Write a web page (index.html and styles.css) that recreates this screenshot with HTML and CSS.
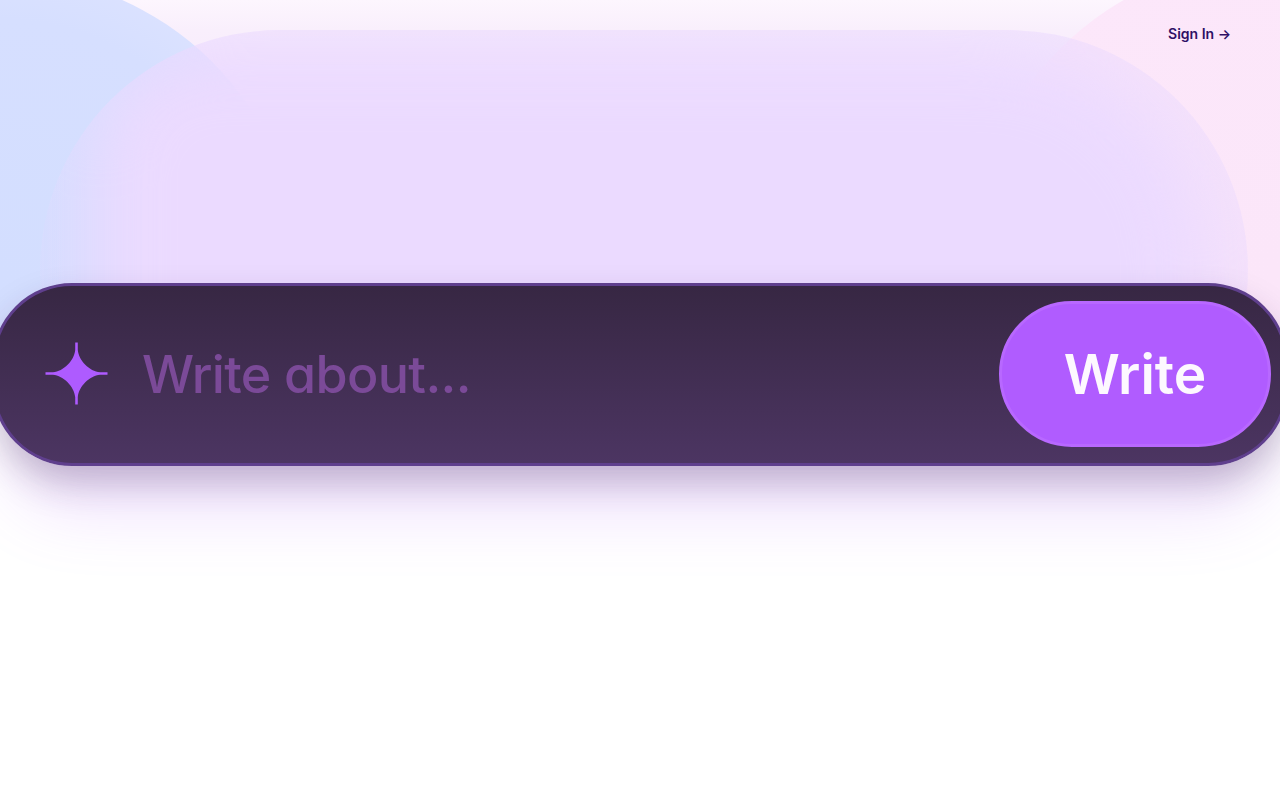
FILE: index.html
```html
<!DOCTYPE html>
<html lang="en">
<head>
<meta charset="utf-8">
<title>Write</title>
<link rel="stylesheet" href="styles.css">
</head>
<body>
<div class="decor" aria-hidden="true">
  <div class="blob blob-blue"></div>
  <div class="blob blob-pink"></div>
  <div class="panel"><div class="panel-core"></div></div>
</div>
<main class="page">
  <header class="topbar">
    <a class="signin" href="#">Sign In →</a>
  </header>
  <form class="bar">
    <svg class="star" viewBox="-32 -32 64 64" aria-hidden="true">
      <path d="M1.3 -31.5L1.3 -24C2.5 -13 13 -2.5 24 -1.3L31.5 -1.3L31.5 1.3L24 1.3C13 2.5 2.5 13 1.3 24L1.3 31.5L-1.3 31.5L-1.3 24C-2.5 13 -13 2.5 -24 1.3L-31.5 1.3L-31.5 -1.3L-24 -1.3C-13 -2.5 -2.5 -13 -1.3 -24L-1.3 -31.5Z"/>
    </svg>
    <span class="placeholder">Write about...</span>
    <button class="write" type="button">Write</button>
  </form>
</main>
</body>
</html>
```
FILE: styles.css
```css
* { box-sizing: border-box; }
html, body { margin: 0; height: 100%; }
body {
  background: #fff;
  font-family: Inter, "Liberation Sans", sans-serif;
  overflow: hidden;
  position: relative;
}
.decor {
  position: absolute;
  inset: 0 0 auto 0;
  height: 374px;
  overflow: hidden;
  background: linear-gradient(180deg, #fdf6fe 0, #f9effc 30px, #f6e8fc 100px);
}
.blob {
  position: absolute;
  top: -26px;
  width: 600px;
  height: 600px;
  border-radius: 50%;
}
.blob-blue {
  left: -300px;
  background: radial-gradient(circle at center, #d3deff 0, #d6dfff 60%, #e6e8ff 100%);
}
.blob-pink {
  right: -312px;
  width: 624px;
  height: 624px;
  top: -42px;
  background: radial-gradient(circle at center, #fbe6f9 0, #fce7fa 80%, #fdeafb 100%);
}
.panel {
  position: absolute;
  left: 40px;
  top: 30px;
  width: 1208px;
  height: 480px;
  border-radius: 240px;
  overflow: hidden;
  background: linear-gradient(90deg, rgba(235, 218, 255, .12) 0, rgba(235, 218, 255, .42) 14%);
}
.panel-core {
  position: absolute;
  inset: 20px 46px 0 56px;
  border-radius: 110px 210px 0 0;
  background: #ebdaff;
  filter: blur(34px);
}
.page {
  position: relative;
  display: flex;
  flex-direction: column;
}
.topbar {
  display: flex;
  justify-content: flex-end;
  padding: 24px 49px 0 0;
  height: 283px;
}
.signin {
  color: #2f1065;
  font-size: 14px;
  font-weight: 600;
  line-height: 20px;
  text-decoration: none;
}
.bar {
  margin: 0 -8px;
  height: 183px;
  border: 3px solid #5f3f8d;
  border-radius: 80px;
  background: linear-gradient(180deg, #372743 0, #4c3562 100%);
  box-shadow: 0 18px 36px -2px rgba(50, 35, 70, .27), 0 62px 72px -22px rgba(176, 92, 255, .2);
  display: flex;
  align-items: center;
  padding: 0 14px 0 50px;
  filter: blur(.35px);
}
.star {
  width: 63px;
  height: 63px;
  margin-bottom: 2px;
  fill: #ae5bff;
  flex: none;
}
.placeholder {
  margin-left: 34px;
  flex: 1;
  color: #7b4a98;
  font-size: 52px;
  font-weight: 500;
  letter-spacing: -.65px;
  font-feature-settings: "cv11" 1;
}
.write {
  width: 272px;
  height: 146px;
  margin-bottom: 2px;
  border: 3px solid #b868ff;
  border-radius: 73px;
  background: #b05cff;
  color: #fdf8ff;
  font-family: inherit;
  font-size: 55px;
  font-weight: 600;
  flex: none;
}
```
